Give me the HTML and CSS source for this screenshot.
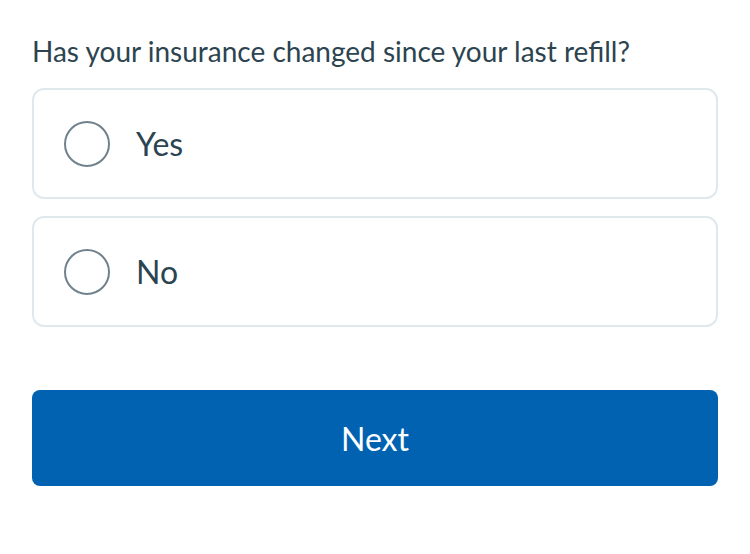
FILE: index.html
```html
<!DOCTYPE html>
<html>
<head>
<meta charset="utf-8">
<link rel="stylesheet" href="styles.css">
</head>
<body>
<main class="page">
  <p class="question">Has your insurance changed since your last refill?</p>
  <div class="options">
    <label class="option"><span class="radio"></span><span class="option-label">Yes</span></label>
    <label class="option"><span class="radio"></span><span class="option-label">No</span></label>
  </div>
  <button class="next">Next</button>
</main>
</body>
</html>
```
FILE: styles.css
```css
html, body {
  margin: 0;
  padding: 0;
  background: #ffffff;
}
.page {
  font-family: Lato, "Open Sans", sans-serif;
  color: #2c4450;
  padding: 34px 32px 0 32px;
  display: flex;
  flex-direction: column;
}
.question {
  margin: 0 0 20px 0;
  font-size: 28px;
  line-height: 34px;
}
.options {
  display: flex;
  flex-direction: column;
  gap: 17px;
}
.option {
  display: flex;
  align-items: center;
  gap: 26px;
  height: 111px;
  box-sizing: border-box;
  padding: 0 30px;
  border: 2px solid #dfe9ed;
  border-radius: 12px;
}
.radio {
  width: 46px;
  height: 46px;
  box-sizing: border-box;
  border: 2px solid #6f828e;
  border-radius: 50%;
  flex: none;
}
.option-label {
  font-size: 32px;
}
.next {
  margin-top: 63px;
  height: 96px;
  border: none;
  border-radius: 8px;
  background: #0062b1;
  color: #ffffff;
  font-family: Lato, "Open Sans", sans-serif;
  font-size: 32px;
}
```
